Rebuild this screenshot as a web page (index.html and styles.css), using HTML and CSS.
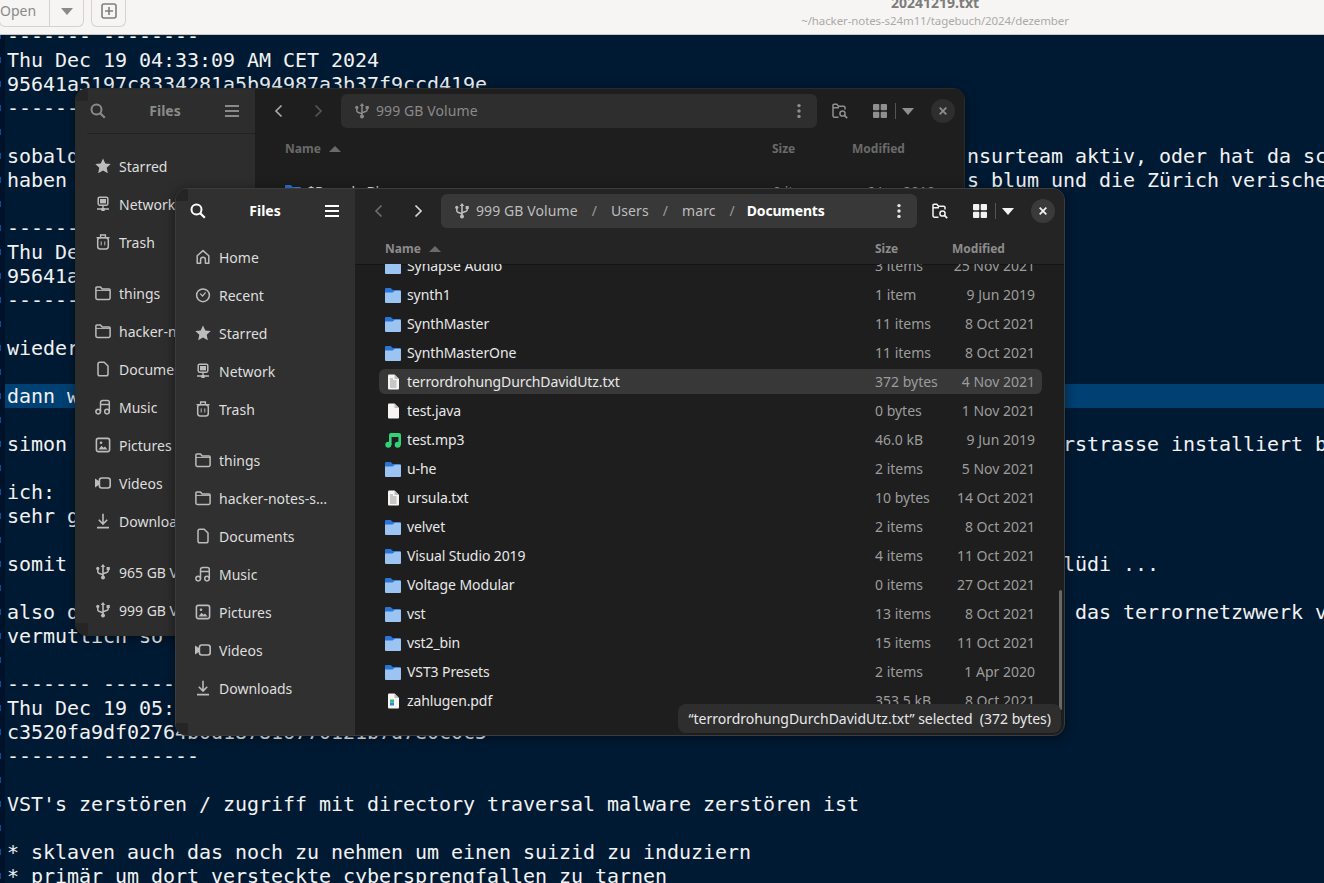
FILE: index.html
```html
<!DOCTYPE html>
<html lang="de">
<head>
    <meta charset="UTF-8">
    <title>20241219.txt</title>
    <link rel="stylesheet" href="styles.css">
</head>
<body>
    <svg class="defs" xmlns="http://www.w3.org/2000/svg">
        <symbol id="i-search" viewBox="0 0 16 16"><circle cx="6.5" cy="6.5" r="5" fill="none" stroke="currentColor" stroke-width="2"/><path d="M10.2 10.2l4.6 4.6" stroke="currentColor" stroke-width="2.2" fill="none"/></symbol>
        <symbol id="i-menu" viewBox="0 0 16 16"><path d="M1 2h14v2H1zM1 7h14v2H1zM1 12h14v2H1z" fill="currentColor"/></symbol>
        <symbol id="i-home" viewBox="0 0 16 16"><path d="M2.2 14.3V6.7L8 1.6l5.8 5.1v7.6h-3.4v-3.6a2.4 2.4 0 0 0-4.8 0v3.6z" fill="none" stroke="currentColor" stroke-width="1.5" stroke-linejoin="round"/></symbol>
        <symbol id="i-recent" viewBox="0 0 16 16"><circle cx="8" cy="8.3" r="6.4" fill="none" stroke="currentColor" stroke-width="1.5"/><path d="M5.2 6.6L7.6 9l3-3.6" fill="none" stroke="currentColor" stroke-width="1.2"/></symbol>
        <symbol id="i-star" viewBox="0 0 16 16"><path d="M8 .4l2.3 5 5.4.6-4 3.7 1.1 5.5L8 12.4l-4.8 2.8 1.1-5.5-4-3.7 5.4-.6z" fill="currentColor"/></symbol>
        <symbol id="i-network" viewBox="0 0 16 16"><rect x="3.2" y="1.2" width="9.6" height="8" rx="1.4" fill="none" stroke="currentColor" stroke-width="1.5"/><rect x="5" y="3" width="6" height="4.4" fill="currentColor"/><path d="M8 9.5v3M2 13h12" stroke="currentColor" stroke-width="1.4" fill="none"/><rect x="6.2" y="12" width="3.6" height="3" rx=".8" fill="currentColor"/></symbol>
        <symbol id="i-trash" viewBox="0 0 16 16"><path d="M1.5 3.6h13M5.6 3.4V1h4.8v2.4" fill="none" stroke="currentColor" stroke-width="1.4"/><rect x="2.7" y="3.8" width="10.6" height="11.2" rx="2.4" fill="none" stroke="currentColor" stroke-width="1.5"/><path d="M6.2 7.4v4M9.8 7.4v4" stroke="currentColor" stroke-width="1" fill="none"/></symbol>
        <symbol id="i-folder" viewBox="0 0 16 16"><path d="M.9 13V2.900a1 1 0 0 1 1-1h3.600l1.700 2h6.900a1 1 0 0 1 1 1V13a1.400 1.400 0 0 1-1.400 1.400H2.300A1.400 1.400 0 0 1 .9 13z" fill="none" stroke="currentColor" stroke-width="1.5" stroke-linejoin="round"/><path d="M1 5.400h14" stroke="currentColor" stroke-width="1" fill="none"/></symbol>
        <symbol id="i-doc" viewBox="0 0 16 16"><path d="M3 3a1.800 1.800 0 0 1 1.800-1.800h4.400L13 5v8a1.800 1.800 0 0 1-1.800 1.800H4.800A1.800 1.800 0 0 1 3 13z" fill="none" stroke="currentColor" stroke-width="1.5" stroke-linejoin="round"/></symbol>
        <symbol id="i-music" viewBox="0 0 16 16"><circle cx="3.200" cy="12.600" r="2.300" fill="none" stroke="currentColor" stroke-width="1.500"/><circle cx="12" cy="12.600" r="2.300" fill="none" stroke="currentColor" stroke-width="1.500"/><path d="M5.500 12.600V3.800a2.400 2.400 0 0 1 2.400-2.400h4.400a2 2 0 0 1 2 2v9.200M5.500 5.400h8.800" fill="none" stroke="currentColor" stroke-width="1.500"/></symbol>
        <symbol id="i-pictures" viewBox="0 0 16 16"><rect x="1.400" y="1.400" width="13.200" height="13.200" rx="2" fill="none" stroke="currentColor" stroke-width="1.600"/><path d="M3.500 12.500l3-3.700 2 2 1.500-1.400 2.500 3.100z" fill="currentColor"/><circle cx="6" cy="5.800" r="1.300" fill="currentColor"/></symbol>
        <symbol id="i-videos" viewBox="0 0 16 16"><rect x="4.400" y="3" width="10.800" height="10" rx="2.400" fill="none" stroke="currentColor" stroke-width="1.600"/><path d="M0 3.500v9l4.500-3V6.500z" fill="currentColor"/></symbol>
        <symbol id="i-download" viewBox="0 0 16 16"><path d="M8 .8v10M3.800 6.800L8 11l4.200-4.200M2 14.600h12" fill="none" stroke="currentColor" stroke-width="1.600"/></symbol>
        <symbol id="i-usb" viewBox="0 0 16 16"><path d="M8 2.500v11" stroke="currentColor" stroke-width="1.600" fill="none"/><path d="M8 0l2.300 3H5.700z" fill="currentColor"/><circle cx="8" cy="13.600" r="2" fill="currentColor"/><path d="M2.800 5.500v2.300a1.500 1.500 0 0 0 1 1.400L8 10.800M13.200 5.500v1.300a1.500 1.500 0 0 1-1 1.400L8 9.800" fill="none" stroke="currentColor" stroke-width="1.500"/><circle cx="2.800" cy="4.400" r="1.600" fill="currentColor"/><rect x="11.600" y="3" width="3.200" height="3" fill="currentColor"/></symbol>
        <symbol id="i-left" viewBox="0 0 16 16"><path d="M10.500 2.500L5 8l5.500 5.500" fill="none" stroke="currentColor" stroke-width="1.700"/></symbol>
        <symbol id="i-right" viewBox="0 0 16 16"><path d="M5.500 2.500L11 8l-5.500 5.500" fill="none" stroke="currentColor" stroke-width="1.700"/></symbol>
        <symbol id="i-dots" viewBox="0 0 16 16"><circle cx="8" cy="2.600" r="1.700" fill="currentColor"/><circle cx="8" cy="8" r="1.700" fill="currentColor"/><circle cx="8" cy="13.400" r="1.700" fill="currentColor"/></symbol>
        <symbol id="i-fsearch" viewBox="0 0 16 16"><path d="M6.500 14.200H2.400a1.400 1.400 0 0 1-1.400-1.400V2.200a1 1 0 0 1 1-1h2.800l1.600 2h5.200a1.400 1.400 0 0 1 1.400 1.400v2M1 4.800h6" fill="none" stroke="currentColor" stroke-width="1.500"/><circle cx="10.500" cy="10.500" r="2.600" fill="none" stroke="currentColor" stroke-width="1.500"/><path d="M12.400 12.400l2.800 2.800" stroke="currentColor" stroke-width="1.800" fill="none"/></symbol>
        <symbol id="i-grid" viewBox="0 0 16 16"><rect x="1" y="1" width="6.300" height="6.300" rx="1" fill="currentColor"/><rect x="8.700" y="1" width="6.300" height="6.300" rx="1" fill="currentColor"/><rect x="1" y="8.700" width="6.300" height="6.300" rx="1" fill="currentColor"/><rect x="8.700" y="8.700" width="6.300" height="6.300" rx="1" fill="currentColor"/></symbol>
        <symbol id="i-caret" viewBox="0 0 16 16"><path d="M2 5h12l-6 7z" fill="currentColor"/></symbol>
        <symbol id="i-close" viewBox="0 0 16 16"><path d="M4.200 4.200l7.600 7.600m0-7.600l-7.600 7.600" fill="none" stroke="currentColor" stroke-width="2"/></symbol>
        <symbol id="i-add" viewBox="0 0 16 16"><rect x="1" y="1" width="14" height="14" rx="2" fill="none" stroke="currentColor" stroke-width="1.600"/><path d="M8 4v8M4 8h8" stroke="currentColor" stroke-width="1.600" fill="none"/></symbol>
        <symbol id="f-folder" viewBox="0 0 16 16"><path d="M0 2a1 1 0 0 1 1-1h4.600l2.200 2H15a1 1 0 0 1 1 1v4H0z" fill="#2a76d8"/><path d="M0 5.500h7.500L10 3.700h5a1 1 0 0 1 1 1V15a1 1 0 0 1-1 1H1a1 1 0 0 1-1-1z" fill="#9cc4f2"/></symbol>
        <symbol id="f-text" viewBox="0 0 16 16"><path d="M3 1.500a1 1 0 0 1 1-1h5.500L14 5v9.500a1 1 0 0 1-1 1H4a1 1 0 0 1-1-1z" fill="#f6f5f4"/><path d="M9.500.5V5H14z" fill="#c0bfbc"/><path d="M5 5h3M5 7h6.500M5 9h6.500M5 11h6.500M5 13h6.500" stroke="#9a9996" stroke-width="1" fill="none"/></symbol>
        <symbol id="f-blank" viewBox="0 0 16 16"><path d="M3 1.500a1 1 0 0 1 1-1h5.500L14 5v9.500a1 1 0 0 1-1 1H4a1 1 0 0 1-1-1z" fill="#f6f5f4"/><path d="M9.500.5V5H14z" fill="#c0bfbc"/></symbol>
        <symbol id="f-music" viewBox="0 0 16 16"><circle cx="3.300" cy="12.800" r="3" fill="#33d17a"/><circle cx="12.700" cy="12.800" r="3" fill="#33d17a"/><path d="M4 13V3a2 2 0 0 1 2-2h8a2 2 0 0 1 2 2v10h-2.600V5H6.600v8z" fill="#33d17a"/></symbol>
        <symbol id="f-pdf" viewBox="0 0 16 16"><path d="M3 1.500a1 1 0 0 1 1-1h5.500L14 5v9.500a1 1 0 0 1-1 1H4a1 1 0 0 1-1-1z" fill="#f6f5f4"/><path d="M9.500.5V5H14z" fill="#c0bfbc"/><rect x="5" y="6.500" width="4" height="3" fill="#2ec27e"/><rect x="5" y="9.500" width="4" height="3" fill="#3584e4"/></symbol>
    </svg>

    <div class="titlebar">
        <div class="open-btn">
            <span class="open-label">Open</span>
            <span class="open-arrow"><svg class="ic"><use href="#i-caret"/></svg></span>
        </div>
        <div class="tab-btn"><svg class="ic"><use href="#i-add"/></svg></div>
        <div class="doc-title">
            <div class="doc-name">20241219.txt</div>
            <div class="doc-path">~/hacker-notes-s24m11/tagebuch/2024/dezember</div>
        </div>
    </div>

    <div class="editor">
<pre class="text">------- --------
Thu Dec 19 04:33:09 AM CET 2024
95641a5197c8334281a5b94987a3b37f9ccd419e
------- --------

sobald                                                                          nsurteam aktiv, oder hat da sc
haben                                                                           s blum und die Zürich verische

-------
Thu De
95641a
-------

wieder

<span class="current-line">dann w</span>
simon                                                                                   rstrasse installiert b

ich:
sehr g

somit                                                                                   lüdi ...

also d                                                                                   das terrornetzwwerk v
vermutlich so

------- ------
Thu Dec 19 05:
c3520fa9df02764b0d187816770121b7d7e0c0c5
------- --------

VST's zerstören / zugriff mit directory traversal malware zerstören ist

* sklaven auch das noch zu nehmen um einen suizid zu induziern
* primär um dort versteckte cybersprengfallen zu tarnen</pre>
    </div>

    <!-- hinteres Fenster -->
    <div class="window window-back">
        <div class="side">
            <div class="side-head">
                <svg class="ic"><use href="#i-search"/></svg>
                <span class="side-title">Files</span>
                <svg class="ic"><use href="#i-menu"/></svg>
            </div>
            <div class="places places-scrolled">
                <div class="place"><svg class="ic"><use href="#i-star"/></svg>Starred</div>
                <div class="place"><svg class="ic"><use href="#i-network"/></svg>Network</div>
                <div class="place"><svg class="ic"><use href="#i-trash"/></svg>Trash</div>
                <div class="place group"><svg class="ic"><use href="#i-folder"/></svg>things</div>
                <div class="place"><svg class="ic"><use href="#i-folder"/></svg>hacker-notes-s…</div>
                <div class="place"><svg class="ic"><use href="#i-doc"/></svg>Documents</div>
                <div class="place"><svg class="ic"><use href="#i-music"/></svg>Music</div>
                <div class="place"><svg class="ic"><use href="#i-pictures"/></svg>Pictures</div>
                <div class="place"><svg class="ic"><use href="#i-videos"/></svg>Videos</div>
                <div class="place"><svg class="ic"><use href="#i-download"/></svg>Downloads</div>
                <div class="place group"><svg class="ic"><use href="#i-usb"/></svg>965 GB Volume</div>
                <div class="place"><svg class="ic"><use href="#i-usb"/></svg>999 GB Volume</div>
            </div>
            <span class="corner corner-top"></span>
            <span class="corner corner-bottom"></span>
        </div>
        <div class="main">
            <div class="toolbar">
                <div class="nav"><svg class="ic"><use href="#i-left"/></svg><svg class="ic dim"><use href="#i-right"/></svg></div>
                <div class="pathbar">
                    <svg class="ic"><use href="#i-usb"/></svg>
                    <span class="crumb">999 GB Volume</span>
                    <svg class="ic path-dots"><use href="#i-dots"/></svg>
                </div>
                <div class="tools">
                    <svg class="ic"><use href="#i-fsearch"/></svg>
                    <div class="view-switch">
                        <svg class="ic"><use href="#i-grid"/></svg>
                        <svg class="ic"><use href="#i-caret"/></svg>
                    </div>
                    <div class="close"><svg class="ic"><use href="#i-close"/></svg></div>
                </div>
            </div>
            <div class="colhead">
                <span class="col-name">Name <i class="sort"></i></span><span>Size</span><span>Modified</span>
            </div>
            <div class="list">
                <div class="row"><span class="name"><svg class="ic"><use href="#f-folder"/></svg>$Recycle.Bin</span><span class="size">0 items</span><span class="date">6 Jun 2019</span></div>
            </div>
        </div>
    </div>

    <!-- vorderes Fenster -->
    <div class="window window-front">
        <div class="side">
            <div class="side-head">
                <svg class="ic"><use href="#i-search"/></svg>
                <span class="side-title">Files</span>
                <svg class="ic"><use href="#i-menu"/></svg>
            </div>
            <div class="places">
                <div class="place"><svg class="ic"><use href="#i-home"/></svg>Home</div>
                <div class="place"><svg class="ic"><use href="#i-recent"/></svg>Recent</div>
                <div class="place"><svg class="ic"><use href="#i-star"/></svg>Starred</div>
                <div class="place"><svg class="ic"><use href="#i-network"/></svg>Network</div>
                <div class="place"><svg class="ic"><use href="#i-trash"/></svg>Trash</div>
                <div class="place group"><svg class="ic"><use href="#i-folder"/></svg>things</div>
                <div class="place"><svg class="ic"><use href="#i-folder"/></svg>hacker-notes-s…</div>
                <div class="place"><svg class="ic"><use href="#i-doc"/></svg>Documents</div>
                <div class="place"><svg class="ic"><use href="#i-music"/></svg>Music</div>
                <div class="place"><svg class="ic"><use href="#i-pictures"/></svg>Pictures</div>
                <div class="place"><svg class="ic"><use href="#i-videos"/></svg>Videos</div>
                <div class="place"><svg class="ic"><use href="#i-download"/></svg>Downloads</div>
            </div>
            <span class="corner corner-top"></span>
            <span class="corner corner-bottom"></span>
        </div>
        <div class="main">
            <div class="toolbar">
                <div class="nav"><svg class="ic dim"><use href="#i-left"/></svg><svg class="ic"><use href="#i-right"/></svg></div>
                <div class="pathbar">
                    <svg class="ic"><use href="#i-usb"/></svg>
                    <span class="crumb">999 GB Volume</span><span class="slash">/</span>
                    <span class="crumb">Users</span><span class="slash">/</span>
                    <span class="crumb">marc</span><span class="slash">/</span>
                    <span class="crumb crumb-current">Documents</span>
                    <svg class="ic path-dots"><use href="#i-dots"/></svg>
                </div>
                <div class="tools">
                    <svg class="ic"><use href="#i-fsearch"/></svg>
                    <div class="view-switch">
                        <svg class="ic"><use href="#i-grid"/></svg>
                        <svg class="ic"><use href="#i-caret"/></svg>
                    </div>
                    <div class="close"><svg class="ic"><use href="#i-close"/></svg></div>
                </div>
            </div>
            <div class="colhead">
                <span class="col-name">Name <i class="sort"></i></span><span>Size</span><span>Modified</span>
            </div>
            <div class="list">
                <div class="row"><span class="name"><svg class="ic"><use href="#f-folder"/></svg>Synapse Audio</span><span class="size">3 items</span><span class="date">25 Nov 2021</span></div>
                <div class="row"><span class="name"><svg class="ic"><use href="#f-folder"/></svg>synth1</span><span class="size">1 item</span><span class="date">9 Jun 2019</span></div>
                <div class="row"><span class="name"><svg class="ic"><use href="#f-folder"/></svg>SynthMaster</span><span class="size">11 items</span><span class="date">8 Oct 2021</span></div>
                <div class="row"><span class="name"><svg class="ic"><use href="#f-folder"/></svg>SynthMasterOne</span><span class="size">11 items</span><span class="date">8 Oct 2021</span></div>
                <div class="row selected"><span class="name"><svg class="ic"><use href="#f-text"/></svg>terrordrohungDurchDavidUtz.txt</span><span class="size">372 bytes</span><span class="date">4 Nov 2021</span></div>
                <div class="row"><span class="name"><svg class="ic"><use href="#f-blank"/></svg>test.java</span><span class="size">0 bytes</span><span class="date">1 Nov 2021</span></div>
                <div class="row"><span class="name"><svg class="ic"><use href="#f-music"/></svg>test.mp3</span><span class="size">46.0 kB</span><span class="date">9 Jun 2019</span></div>
                <div class="row"><span class="name"><svg class="ic"><use href="#f-folder"/></svg>u-he</span><span class="size">2 items</span><span class="date">5 Nov 2021</span></div>
                <div class="row"><span class="name"><svg class="ic"><use href="#f-text"/></svg>ursula.txt</span><span class="size">10 bytes</span><span class="date">14 Oct 2021</span></div>
                <div class="row"><span class="name"><svg class="ic"><use href="#f-folder"/></svg>velvet</span><span class="size">2 items</span><span class="date">8 Oct 2021</span></div>
                <div class="row"><span class="name"><svg class="ic"><use href="#f-folder"/></svg>Visual Studio 2019</span><span class="size">4 items</span><span class="date">11 Oct 2021</span></div>
                <div class="row"><span class="name"><svg class="ic"><use href="#f-folder"/></svg>Voltage Modular</span><span class="size">0 items</span><span class="date">27 Oct 2021</span></div>
                <div class="row"><span class="name"><svg class="ic"><use href="#f-folder"/></svg>vst</span><span class="size">13 items</span><span class="date">8 Oct 2021</span></div>
                <div class="row"><span class="name"><svg class="ic"><use href="#f-folder"/></svg>vst2_bin</span><span class="size">15 items</span><span class="date">11 Oct 2021</span></div>
                <div class="row"><span class="name"><svg class="ic"><use href="#f-folder"/></svg>VST3 Presets</span><span class="size">2 items</span><span class="date">1 Apr 2020</span></div>
                <div class="row"><span class="name"><svg class="ic"><use href="#f-pdf"/></svg>zahlugen.pdf</span><span class="size">353.5 kB</span><span class="date">8 Oct 2021</span></div>
            </div>
            <div class="scrollbar"></div>
            <div class="status">“terrordrohungDurchDavidUtz.txt” selected  (372 bytes)</div>
        </div>
    </div>
</body>
</html>
```

FILE: styles.css
```css
html, body {
    margin: 0;
    height: 100%;
    overflow: hidden;
}
body {
    background-color: #001a33;
    font-family: "Noto Sans", sans-serif;
}
.defs {
    position: absolute;
    width: 0;
    height: 0;
}
.ic {
    width: 16px;
    height: 16px;
    flex: none;
}

/* Editor-Titelleiste */
.titlebar {
    height: 34px;
    display: flex;
    align-items: flex-start;
    position: relative;
    background-color: #f6f5f4;
    border-bottom: 1px solid #c8c6c3;
}
.open-btn {
    display: flex;
    width: 85px;
    height: 27px;
    box-sizing: border-box;
    margin-left: -1px;
    border: 1px solid #d6d3cf;
    border-top: none;
    border-radius: 0 0 6px 6px;
    color: #8a8a88;
    font-size: 14px;
}
.open-label {
    width: 49px;
    line-height: 22px;
    border-right: 1px solid #d6d3cf;
}
.open-arrow {
    flex: 1;
    display: flex;
    justify-content: center;
    padding-top: 3px;
}
.tab-btn {
    width: 35px;
    height: 27px;
    box-sizing: border-box;
    margin-left: 7px;
    display: flex;
    justify-content: center;
    padding-top: 3px;
    border: 1px solid #d6d3cf;
    border-top: none;
    border-radius: 0 0 6px 6px;
    color: #807f7d;
}
.doc-title {
    position: absolute;
    left: 635px;
    width: 600px;
    top: -6px;
    text-align: center;
}
.doc-name {
    font-size: 14px;
    font-weight: 700;
    line-height: 18px;
    color: #7c7c7a;
}
.doc-path {
    font-size: 11.5px;
    letter-spacing: -0.1px;
    line-height: 16px;
    margin-top: 1px;
    color: #aaaaa8;
}

/* Editor-Text */
.editor {
    height: 848px;
    overflow: hidden;
    padding-left: 5px;
    background-color: #00112a;
    background-image: linear-gradient(#0b4f9a 6px, transparent 6px);
    background-size: 1px 24px;
    background-position: 0 22px;
    background-repeat: repeat-y;
}
.text {
    margin: -11px 0 0;
    padding-left: 2px;
    min-height: 870px;
    background-color: #001a33;
    font-family: "DejaVu Sans Mono", monospace;
    font-size: 20px;
    letter-spacing: -0.04px;
    line-height: 24px;
    color: #f2f2f2;
}
.current-line {
    display: block;
    margin-left: -2px;
    padding-left: 2px;
    background-color: #004072;
}

/* Fenster */
.window {
    position: absolute;
    width: 890px;
    height: 548px;
    box-sizing: border-box;
    display: flex;
    overflow: hidden;
    border-radius: 12px;
    border: 1px solid #3c3c3c;
    background-color: #1e1e1e;
    box-shadow: 0 2px 12px rgba(0, 0, 0, 0.45);
    color: #e6e6e6;
    font-size: 14px;
}
.window-back {
    left: 75px;
    top: 88px;
    border-color: #2b2b2b;
}
.window-front {
    left: 175px;
    top: 188px;
}
.side {
    width: 179px;
    flex: none;
    display: flex;
    flex-direction: column;
    background-color: #303030;
    position: relative;
}
.side-head {
    height: 44px;
    flex: none;
    display: flex;
    align-items: center;
    justify-content: space-between;
    padding: 0 15px 0 14px;
    color: #fff;
}
.side-title {
    padding-bottom: 2px;
    font-weight: 700;
    font-size: 14px;
}
.places {
    padding-top: 5px;
}
.place {
    height: 38px;
    display: flex;
    align-items: center;
    gap: 8px;
    padding-left: 19px;
    white-space: nowrap;
    color: #dedede;
}
.place .ic {
    color: #bcbcbc;
}
.place.group {
    margin-top: 13px;
}
.places-scrolled {
    padding-top: 13px;
    border-top: 1px solid #222;
    margin-left: 11px;
}
.places-scrolled .place {
    padding-left: 8px;
}
.corner {
    position: absolute;
    left: 0;
    width: 12px;
    height: 12px;
    background-color: #252525;
}
.corner-top {
    top: 0;
}
.corner-bottom {
    bottom: 0;
}

.main {
    flex: 1;
    min-width: 0;
    display: flex;
    flex-direction: column;
    position: relative;
}
.toolbar {
    height: 44px;
    flex: none;
    display: flex;
    align-items: center;
    padding-left: 16px;
    background-color: #242424;
}
.nav {
    display: flex;
    gap: 23px;
    color: #d8d8d8;
}
.nav .dim {
    color: #6c6c6c;
}
.pathbar {
    width: 476px;
    height: 34px;
    box-sizing: border-box;
    flex: none;
    margin-left: 15px;
    display: flex;
    align-items: center;
    padding: 0 10px 0 13px;
    border-radius: 6px;
    background-color: #383838;
    color: #bdbdbd;
}
.crumb {
    margin-left: 6px;
    padding-bottom: 2px;
    letter-spacing: 0.1px;
    white-space: nowrap;
}
.slash {
    margin: 0 14px;
    padding-bottom: 2px;
    color: #9a9a9a;
}
.slash + .crumb {
    margin-left: 0;
}
.slash + .crumb-current {
    margin-left: -2px;
}
.crumb-current {
    color: #fff;
    font-weight: 700;
    letter-spacing: -0.2px;
}
.path-dots {
    margin-left: auto;
    color: #e6e6e6;
}
.tools {
    display: flex;
    align-items: center;
    margin-left: 15px;
    color: #f2f2f2;
}
.view-switch {
    display: flex;
    align-items: center;
    gap: 7px;
    margin-left: 24px;
}
.view-switch .ic:last-child {
    padding-left: 4px;
    box-sizing: content-box;
    border-left: 1px solid #555;
}
.close {
    width: 24px;
    height: 24px;
    margin-left: 15px;
    display: flex;
    align-items: center;
    justify-content: center;
    border-radius: 50%;
    background-color: #3a3a3a;
}
.close .ic {
    width: 14px;
    height: 14px;
}

/* Dateiliste */
.colhead {
    height: 32px;
    flex: none;
    display: grid;
    grid-template-columns: 1fr 77px 90px;
    align-items: center;
    padding: 0 22px 0 30px;
    box-sizing: border-box;
    border-bottom: 1px solid #141414;
    background-color: #242424;
    color: #8c8c8c;
    font-size: 12px;
    font-weight: 700;
}
.sort {
    display: inline-block;
    margin-left: 5px;
    vertical-align: 1px;
    border-left: 6px solid transparent;
    border-right: 6px solid transparent;
    border-bottom: 6px solid #6a6a6a;
}
.list {
    flex: 1;
    overflow: hidden;
    padding: 0 22px 0 24px;
    margin-top: -1px;
}
.row {
    height: 25px;
    margin-bottom: 4px;
    display: grid;
    grid-template-columns: 1fr 77px 83px;
    align-items: center;
    padding: 0 7px 0 6px;
    border-radius: 6px;
    color: #e8e8e8;
}
.list .row:first-child {
    margin-top: -11px;
}
.row.selected {
    background-color: #383838;
}
.name {
    display: flex;
    align-items: center;
    gap: 6px;
    letter-spacing: -0.1px;
    white-space: nowrap;
}
.size, .date {
    color: #9c9c9c;
    white-space: nowrap;
}
.date {
    text-align: right;
}
.scrollbar {
    position: absolute;
    right: 2px;
    top: 401px;
    width: 3px;
    height: 120px;
    border-radius: 2px;
    background-color: #686868;
}
.status {
    position: absolute;
    right: 3px;
    bottom: 2px;
    height: 29px;
    line-height: 29px;
    padding: 0 10px 0 11px;
    border-radius: 8px;
    background-color: #2e2e2e;
    white-space: pre;
    color: #e8e8e8;
}

/* hinteres Fenster ist inaktiv */
.window-back .side {
    background-color: #2d2d2d;
}
.window-back .side-head,
.window-back .side-title {
    color: #8a8a8a;
}
.window-back .toolbar,
.window-back .colhead {
    background-color: #1e1e1e;
    border-bottom-color: transparent;
    color: #6a6a6a;
}
.window-back .pathbar {
    background-color: #2e2e2e;
    color: #8a8a8a;
}
.window-back .path-dots,
.window-back .tools {
    color: #8f8f8f;
}
.window-back .nav {
    color: #a8a8a8;
}
.window-back .nav .dim {
    color: #555;
}
.window-back .close {
    background-color: #2e2e2e;
}
.window-back .colhead {
    grid-template-columns: 1fr 80px 90px;
}
.window-back .row {
    grid-template-columns: 1fr 79px 83px;
}
.window-back .list .row:first-child {
    margin-top: 15px;
}
```
